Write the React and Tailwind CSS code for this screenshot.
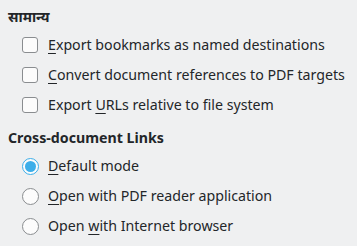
import React from "react";

const U = ({ children }) => <span className="underline underline-offset-[3px] decoration-1">{children}</span>;

function Check({ children }) {
  return (
    <div className="flex items-center h-[30px] pl-[22px]">
      <div className="w-[16px] h-[16px] rounded-[3px] border border-[#8a8d90] bg-[#fcfcfc] shrink-0" />
      <div className="ml-[10px]">{children}</div>
    </div>
  );
}

function Radio({ checked, children }) {
  return (
    <div className="flex items-center h-[30px] pl-[22px]">
      {checked ? (
        <div className="w-[17px] h-[17px] rounded-full border border-[#3daee9] bg-[#fcfcfc] shrink-0 flex items-center justify-center">
          <div className="w-[11px] h-[11px] rounded-full bg-[#3daee9]" />
        </div>
      ) : (
        <div className="w-[17px] h-[17px] rounded-full border border-[#8a8d90] bg-[#fcfcfc] shrink-0" />
      )}
      <div className="ml-[9px]">{children}</div>
    </div>
  );
}

export default function App() {
  return (
    <div className="w-[357px] h-[246px] bg-[#eff0f1] text-[#232629] text-[14.2px] pt-[4px]" style={{ fontFamily: '"Noto Sans", sans-serif' }}>
      <div className="h-[26px] flex items-center pl-[8px] font-bold">सामान्य</div>
      <Check><U>E</U>xport bookmarks as named destinations</Check>
      <Check><U>C</U>onvert document references to PDF targets</Check>
      <Check>Export <U>U</U>RLs relative to file system</Check>
      <div className="h-[26px] mt-[5px] flex items-center pl-[8px] font-bold">Cross-document Links</div>
      <Radio checked><U>D</U>efault mode</Radio>
      <Radio><U>O</U>pen with PDF reader application</Radio>
      <Radio>Open <U>w</U>ith Internet browser</Radio>
    </div>
  );
}
